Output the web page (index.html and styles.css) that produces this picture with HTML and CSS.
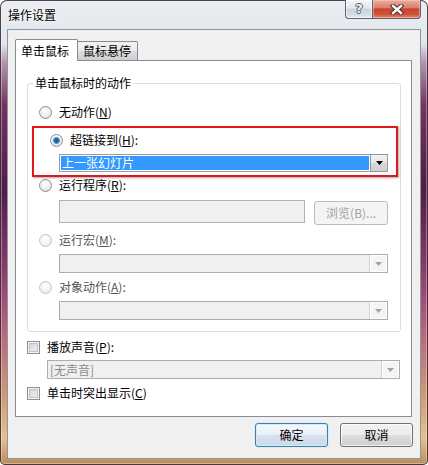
FILE: index.html
```html
<!DOCTYPE html>
<html lang="zh-CN">
<head>
<meta charset="utf-8">
<title>操作设置</title>
<link rel="stylesheet" href="styles.css">
</head>
<body>
<div class="window">
  <div class="titlebar">
    <span class="title">操作设置</span>
    <div class="caption-buttons">
      <div class="cap help"><span class="q">?</span></div>
      <div class="cap close">
        <svg width="14" height="11" viewBox="0 0 14 11">
          <path d="M3 2 L11 9 M11 2 L3 9" stroke="#4a3030" stroke-width="4.4" stroke-linecap="square"/>
          <path d="M3 2 L11 9 M11 2 L3 9" stroke="#ffffff" stroke-width="2.4" stroke-linecap="square"/>
        </svg>
      </div>
    </div>
  </div>
  <div class="client">
    <div class="tabs">
      <div class="tab active">单击鼠标</div>
      <div class="tab">鼠标悬停</div>
    </div>
    <div class="panel">
      <fieldset class="group">
        <legend>单击鼠标时的动作</legend>
        <div class="opt"><span class="radio"></span><span class="label">无动作(<u>N</u>)</span></div>
        <div class="highlight">
          <div class="opt"><span class="radio checked"></span><span class="label">超链接到(<u>H</u>):</span></div>
          <div class="combo active">
            <div class="field">上一张幻灯片</div>
            <div class="drop"><svg width="7" height="4" viewBox="0 0 7 4"><polygon points="0,0 7,0 3.5,4" fill="#000"/></svg></div>
          </div>
        </div>
        <div class="opt"><span class="radio"></span><span class="label">运行程序(<u>R</u>):</span></div>
        <div class="prog-row">
          <div class="textbox"></div>
          <div class="browse">浏览(B)...</div>
        </div>
        <div class="opt disabled"><span class="radio"></span><span class="label">运行宏(<u>M</u>):</span></div>
        <div class="combo disabled sub">
          <div class="field"></div>
          <div class="drop"><svg width="7" height="4" viewBox="0 0 7 4"><polygon points="0,0 7,0 3.5,4" fill="#a3a3a3"/></svg></div>
        </div>
        <div class="opt disabled"><span class="radio"></span><span class="label">对象动作(<u>A</u>):</span></div>
        <div class="combo disabled sub">
          <div class="field"></div>
          <div class="drop"><svg width="7" height="4" viewBox="0 0 7 4"><polygon points="0,0 7,0 3.5,4" fill="#a3a3a3"/></svg></div>
        </div>
      </fieldset>
      <div class="check-row first"><span class="checkbox"></span><span class="label">播放声音(<u>P</u>):</span></div>
      <div class="combo disabled sound">
        <div class="field">[无声音]</div>
        <div class="drop"><svg width="7" height="4" viewBox="0 0 7 4"><polygon points="0,0 7,0 3.5,4" fill="#a3a3a3"/></svg></div>
      </div>
      <div class="check-row"><span class="checkbox"></span><span class="label">单击时突出显示(<u>C</u>)</span></div>
    </div>
    <div class="buttons">
      <div class="btn default">确定</div>
      <div class="btn">取消</div>
    </div>
  </div>
</div>
</body>
</html>
```

FILE: styles.css
```css
html, body {
  margin: 0;
  padding: 0;
  background: #ffffff;
}

body {
  font-family: "Noto Sans CJK SC", "Microsoft YaHei", "DejaVu Sans", sans-serif;
  font-size: 12px;
  color: #000;
}

.window {
  width: 428px;
  height: 465px;
  box-sizing: border-box;
  padding: 0 7px 6px 7px;
  display: flex;
  flex-direction: column;
  border-radius: 7px 7px 5px 5px;
  box-shadow: inset 0 0 0 1px rgba(50, 30, 45, 0.85), inset 0 0 0 2px rgba(255, 255, 255, 0.35);
  background: linear-gradient(to bottom,
    #e9eef3 0px,
    #e4e9ee 30px,
    #dfe5ea 44px,
    #b596ad 62px,
    #74345f 105px,
    #521c47 190px,
    #873a69 265px,
    #b7637f 330px,
    #cf9a72 395px,
    #e3c28d 438px,
    #ba8a58 465px);
}

.titlebar {
  height: 29px;
  flex: none;
  display: flex;
  justify-content: space-between;
  align-items: flex-start;
  padding-left: 1px;
}

.title {
  padding-top: 7px;
  line-height: 16px;
  font-size: 12px;
  text-shadow: 0 0 6px #ffffff, 0 0 3px #ffffff;
}

.caption-buttons {
  display: flex;
  height: 19px;
}

.cap {
  height: 19px;
  box-sizing: border-box;
  border: 1px solid #59626e;
  border-top: none;
  display: flex;
  align-items: center;
  justify-content: center;
}

.help {
  width: 27px;
  border-radius: 0 0 0 4px;
  border-right: none;
  background: linear-gradient(to bottom, #f2f5f8 0%, #e2e8ee 45%, #cbd4de 50%, #d6dee6 85%, #e6ebf0 100%);
  box-shadow: inset 0 0 0 1px rgba(255, 255, 255, 0.6);
}

.q {
  font-family: "DejaVu Sans", sans-serif;
  font-size: 13px;
  font-weight: bold;
  line-height: 14px;
  color: #eef1f4;
  text-shadow: 1px 0 0 #58606b, -1px 0 0 #58606b, 0 1px 0 #58606b, 0 -1px 0 #58606b;
}

.close {
  width: 49px;
  border-radius: 0 0 4px 0;
  background: linear-gradient(to bottom, #eab0a2 0%, #dc806b 42%, #c8442c 50%, #cf5439 80%, #e08a70 100%);
  box-shadow: inset 0 0 0 1px rgba(255, 210, 200, 0.5);
}

.close svg {
  display: block;
}

.client {
  flex: 1;
  box-sizing: border-box;
  border: 1px solid #8c96a2;
  background: #f0f0f0;
  padding: 9px 8px 0 7px;
  display: flex;
  flex-direction: column;
}

.tabs {
  display: flex;
  align-items: flex-end;
  height: 21px;
  flex: none;
}

.tab {
  box-sizing: border-box;
  border: 1px solid #898c95;
  border-bottom: none;
  line-height: 16px;
  padding-left: 5px;
  display: flex;
  align-items: center;
}

.tab.active {
  width: 63px;
  height: 22px;
  margin-bottom: -1px;
  background: #ffffff;
  position: relative;
  z-index: 1;
  border-radius: 2px 2px 0 0;
  padding-top: 1px;
}

.tab:not(.active) {
  width: 60px;
  height: 19px;
  border-left: none;
  background: linear-gradient(to bottom, #f2f2f2 0%, #ebebeb 50%, #dddddd 51%, #cfcfcf 100%);
  border-radius: 0 2px 0 0;
}

.panel {
  height: 357px;
  flex: none;
  box-sizing: border-box;
  border: 1px solid #898c95;
  background: #ffffff;
  padding: 14px 10px 0 11px;
}

.group {
  margin: 0;
  padding: 13px 0 11px 0;
  border: 1px solid #d5dfe5;
  border-radius: 3px;
  min-width: 0;
}

.group legend {
  margin-left: 5px;
  padding: 0 2px;
  line-height: 16px;
}

.opt {
  display: flex;
  align-items: center;
  height: 16px;
  line-height: 16px;
  padding-left: 11px;
}

.opt .label,
.check-row .label {
  margin-left: 7px;
}

.opt.disabled .label {
  color: #555555;
}

.radio {
  width: 13px;
  height: 13px;
  box-sizing: border-box;
  border-radius: 50%;
  border: 1px solid #8e8f8f;
  background: radial-gradient(circle at 45% 35%, #ffffff 0%, #ececec 55%, #d4d4d4 100%);
  flex: none;
}

.radio.checked {
  background:
    radial-gradient(circle at 50% 50%, #1b4f82 0px, #2b6aa6 2px, #6aa6d8 3.2px, rgba(255,255,255,0) 3.8px),
    radial-gradient(circle at 45% 35%, #ffffff 0%, #ececec 55%, #d4d4d4 100%);
}

.opt.disabled .radio {
  border-color: #c3c3c3;
  background: radial-gradient(circle at 45% 35%, #ffffff 0%, #f1f1f1 60%, #e4e4e4 100%);
}

.highlight {
  margin: 6px 2px 0 4px;
  border: 2px solid #e0181e;
  padding: 4px 8px 3px 5px;
  box-shadow: 1px 1px 2px rgba(0, 0, 0, 0.35);
}

.combo {
  display: flex;
  box-sizing: border-box;
  height: 19px;
}

.highlight .combo {
  margin: 6px 0 0 20px;
  height: 18px;
}

.combo.active {
  border: 1px solid #9a9ea3;
  padding: 1px 0 1px 1px;
  background: #ffffff;
}

.combo.active .field {
  flex: 1;
  background: #3399ff;
  color: #ffffff;
  line-height: 14px;
  padding-left: 1px;
  font-size: 12px;
}

.combo.active .drop {
  width: 17px;
  margin: -2px 0 -2px 1px;
  box-sizing: border-box;
  border: 1px solid #8f959c;
  border-right: none;
  background: linear-gradient(to bottom, #f4f4f4 0%, #e6e6e6 50%, #d8d8d8 51%, #d0d0d0 100%);
  display: flex;
  align-items: center;
  justify-content: center;
}

.prog-row {
  display: flex;
  margin: 7px 12px 0 31px;
  height: 25px;
}

.textbox {
  width: 247px;
  height: 23px;
  box-sizing: border-box;
  border: 1px solid #b1b1b1;
  background: #f0f0f0;
}

.browse {
  margin-left: 9px;
  margin-top: 1px;
  width: 74px;
  height: 24px;
  box-sizing: border-box;
  border: 1px solid #b9bdc1;
  border-radius: 3px;
  background: #f4f4f4;
  color: #a3a3a3;
  display: flex;
  align-items: center;
  justify-content: center;
  line-height: 16px;
}

.prog-row + .opt {
  margin-top: 7px;
}

.combo.disabled {
  border: 1px solid #adadad;
  background: #f0f0f0;
}

.combo.disabled .field {
  flex: 1;
  color: #8d8d8d;
  line-height: 17px;
  padding-left: 2px;
}

.combo.disabled .drop {
  width: 18px;
  box-sizing: border-box;
  border-left: 1px solid #d2d2d2;
  background: #f4f4f4;
  box-shadow: inset 0 0 0 1px #ffffff;
  display: flex;
  align-items: center;
  justify-content: center;
}

.combo.sub {
  margin: 6px 12px 0 31px;
}

.combo.sub + .opt {
  margin-top: 6px;
}

.check-row {
  display: flex;
  align-items: center;
  height: 16px;
  line-height: 16px;
  margin-top: 6px;
}

.check-row.first {
  margin-top: 7px;
}

.checkbox {
  width: 13px;
  height: 13px;
  box-sizing: border-box;
  border: 1px solid #8e8f8f;
  background: linear-gradient(135deg, #c9ced4 0%, #e1e3e6 50%, #f4f4f4 100%);
  box-shadow: inset 0 0 0 1px #f4f4f4, inset 0 0 0 2px #bfc4ca;
  flex: none;
}

.combo.sound {
  margin: 5px 1px 0 20px;
}

.buttons {
  display: flex;
  justify-content: flex-end;
  gap: 12px;
  margin-top: 6px;
  margin-right: -1px;
}

.btn {
  width: 73px;
  height: 24px;
  box-sizing: border-box;
  border: 1px solid #707070;
  border-radius: 3px;
  background: linear-gradient(to bottom, #f2f2f2 0%, #ebebeb 50%, #dddddd 51%, #cfcfcf 100%);
  box-shadow: inset 0 0 0 1px rgba(255, 255, 255, 0.7);
  display: flex;
  align-items: center;
  justify-content: center;
  line-height: 16px;
}

.btn.default {
  border-color: #3c7fb1;
  background: linear-gradient(to bottom, #f3f8fc 0%, #e8f0f7 50%, #d6e2ed 51%, #cbd9e6 100%);
  box-shadow: inset 0 0 0 1px #d2ecfa, 0 0 1px #7fb5e0;
}
```
